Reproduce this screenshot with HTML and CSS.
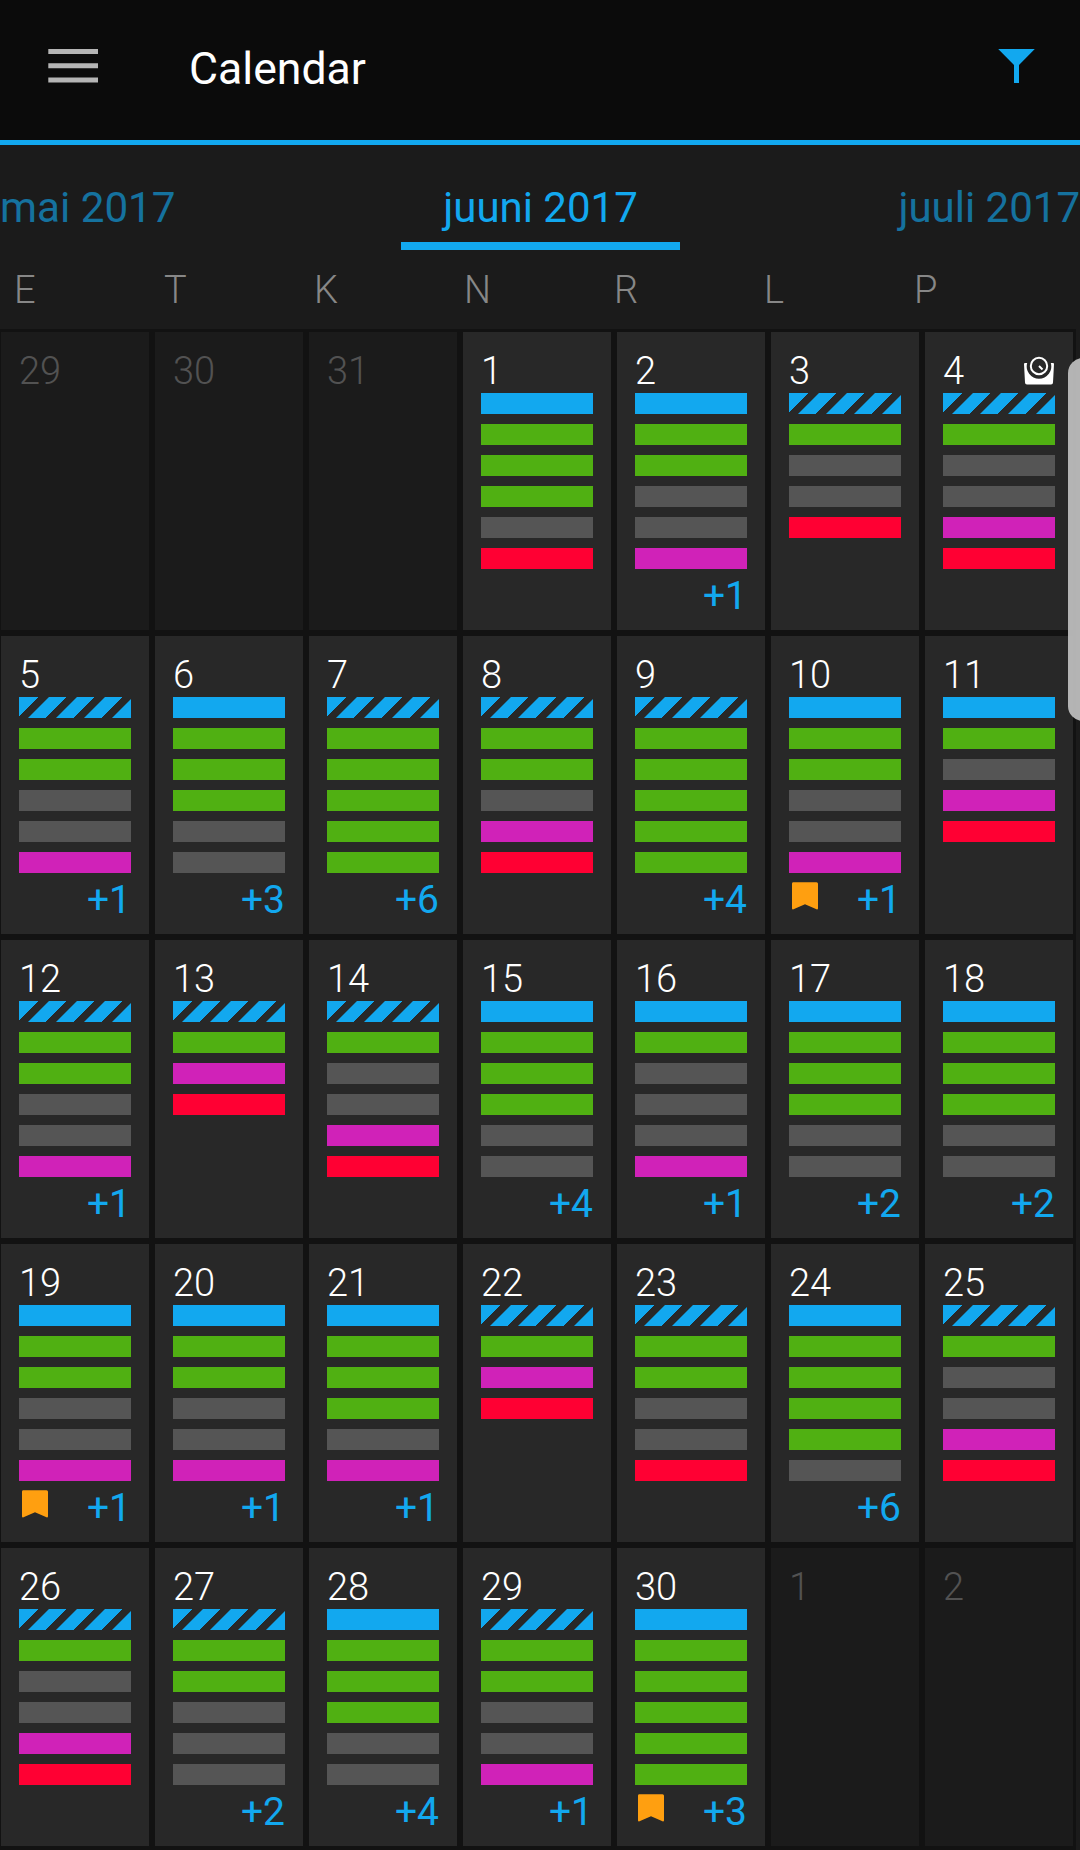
FILE: index.html
```html
<!DOCTYPE html>
<html lang="et">
<head>
<meta charset="utf-8">
<title>Calendar</title>
<link rel="stylesheet" href="styles.css">
</head>
<body>
<svg class="defs" width="0" height="0" aria-hidden="true">
  <symbol id="bookmark" viewBox="0 0 28 28"><path d="M2 .3h23.500a1.500 1.500 0 0 1 1.500 1.500v24.500a1 1 0 0 1-1.500 1L14 22.200 2.500 27.300a1 1 0 0 1-1.500-1V1.800A1.500 1.500 0 0 1 2 .3z"/></symbol>
</svg>
<header class="topbar">
  <svg class="menu" width="50" height="36" viewBox="0 0 50 36"><path d="M.3 1H50v5H.3zM.3 15.200H50v5H.3zM.3 29.400H50v5H.3z"/></svg>
  <h1 class="title">Calendar</h1>
  <svg class="filter" width="38" height="35" viewBox="0 0 38 35"><path d="M1.200 0h36.600L22 16V34h-5V16z"/></svg>
</header>
<nav class="months">
  <span class="month prev">mai 2017</span>
  <span class="month current">juuni 2017</span>
  <span class="month next">juuli 2017</span>
</nav>
<div class="weekdays"><span>E</span><span>T</span><span>K</span><span>N</span><span>R</span><span>L</span><span>P</span></div>
<main class="grid">
  <section class="day out"><b>29</b></section>
  <section class="day out"><b>30</b></section>
  <section class="day out"><b>31</b></section>
  <section class="day"><b>1</b><i class="blue"></i><i class="green"></i><i class="green"></i><i class="green"></i><i></i><i class="red"></i></section>
  <section class="day"><b>2</b><i class="blue"></i><i class="green"></i><i class="green"></i><i></i><i></i><i class="pink"></i><footer><em>+1</em></footer></section>
  <section class="day"><b>3</b><i class="striped"></i><i class="green"></i><i></i><i></i><i class="red"></i></section>
  <section class="day"><b>4<svg class="scale" width="32" height="29" viewBox="0 0 32 29"><path class="body" d="M2 7h2.200A12.300 12.300 0 1 0 27.800 7H30a1 1 0 0 1 1 1L30 26.500a2 2 0 0 1-2 2H4a2 2 0 0 1-2-2L1 8a1 1 0 0 1 1-1z"/><circle cx="16" cy="10" r="8.200"/><path class="needle" d="M16 10l3.500 3.500"/></svg></b><i class="striped"></i><i class="green"></i><i></i><i></i><i class="pink"></i><i class="red"></i></section>

  <section class="day"><b>5</b><i class="striped"></i><i class="green"></i><i class="green"></i><i></i><i></i><i class="pink"></i><footer><em>+1</em></footer></section>
  <section class="day"><b>6</b><i class="blue"></i><i class="green"></i><i class="green"></i><i class="green"></i><i></i><i></i><footer><em>+3</em></footer></section>
  <section class="day"><b>7</b><i class="striped"></i><i class="green"></i><i class="green"></i><i class="green"></i><i class="green"></i><i class="green"></i><footer><em>+6</em></footer></section>
  <section class="day"><b>8</b><i class="striped"></i><i class="green"></i><i class="green"></i><i></i><i class="pink"></i><i class="red"></i></section>
  <section class="day"><b>9</b><i class="striped"></i><i class="green"></i><i class="green"></i><i class="green"></i><i class="green"></i><i class="green"></i><footer><em>+4</em></footer></section>
  <section class="day"><b>10</b><i class="blue"></i><i class="green"></i><i class="green"></i><i></i><i></i><i class="pink"></i><footer><svg class="mark"><use href="#bookmark"/></svg><em>+1</em></footer></section>
  <section class="day"><b>11</b><i class="blue"></i><i class="green"></i><i></i><i class="pink"></i><i class="red"></i></section>

  <section class="day"><b>12</b><i class="striped"></i><i class="green"></i><i class="green"></i><i></i><i></i><i class="pink"></i><footer><em>+1</em></footer></section>
  <section class="day"><b>13</b><i class="striped"></i><i class="green"></i><i class="pink"></i><i class="red"></i></section>
  <section class="day"><b>14</b><i class="striped"></i><i class="green"></i><i></i><i></i><i class="pink"></i><i class="red"></i></section>
  <section class="day"><b>15</b><i class="blue"></i><i class="green"></i><i class="green"></i><i class="green"></i><i></i><i></i><footer><em>+4</em></footer></section>
  <section class="day"><b>16</b><i class="blue"></i><i class="green"></i><i></i><i></i><i></i><i class="pink"></i><footer><em>+1</em></footer></section>
  <section class="day"><b>17</b><i class="blue"></i><i class="green"></i><i class="green"></i><i class="green"></i><i></i><i></i><footer><em>+2</em></footer></section>
  <section class="day"><b>18</b><i class="blue"></i><i class="green"></i><i class="green"></i><i class="green"></i><i></i><i></i><footer><em>+2</em></footer></section>

  <section class="day"><b>19</b><i class="blue"></i><i class="green"></i><i class="green"></i><i></i><i></i><i class="pink"></i><footer><svg class="mark"><use href="#bookmark"/></svg><em>+1</em></footer></section>
  <section class="day"><b>20</b><i class="blue"></i><i class="green"></i><i class="green"></i><i></i><i></i><i class="pink"></i><footer><em>+1</em></footer></section>
  <section class="day"><b>21</b><i class="blue"></i><i class="green"></i><i class="green"></i><i class="green"></i><i></i><i class="pink"></i><footer><em>+1</em></footer></section>
  <section class="day"><b>22</b><i class="striped"></i><i class="green"></i><i class="pink"></i><i class="red"></i></section>
  <section class="day"><b>23</b><i class="striped"></i><i class="green"></i><i class="green"></i><i></i><i></i><i class="red"></i></section>
  <section class="day"><b>24</b><i class="blue"></i><i class="green"></i><i class="green"></i><i class="green"></i><i class="green"></i><i></i><footer><em>+6</em></footer></section>
  <section class="day"><b>25</b><i class="striped"></i><i class="green"></i><i></i><i></i><i class="pink"></i><i class="red"></i></section>

  <section class="day"><b>26</b><i class="striped"></i><i class="green"></i><i></i><i></i><i class="pink"></i><i class="red"></i></section>
  <section class="day"><b>27</b><i class="striped"></i><i class="green"></i><i class="green"></i><i></i><i></i><i></i><footer><em>+2</em></footer></section>
  <section class="day"><b>28</b><i class="blue"></i><i class="green"></i><i class="green"></i><i class="green"></i><i></i><i></i><footer><em>+4</em></footer></section>
  <section class="day"><b>29</b><i class="striped"></i><i class="green"></i><i class="green"></i><i></i><i></i><i class="pink"></i><footer><em>+1</em></footer></section>
  <section class="day"><b>30</b><i class="blue"></i><i class="green"></i><i class="green"></i><i class="green"></i><i class="green"></i><i class="green"></i><footer><svg class="mark"><use href="#bookmark"/></svg><em>+3</em></footer></section>
  <section class="day out"><b>1</b></section>
  <section class="day out"><b>2</b></section>
</main>
<div class="thumb"></div>
</body>
</html>
```
FILE: styles.css
```css
* { box-sizing: border-box; }

body {
  position: relative;
  width: 1080px;
  height: 1850px;
  margin: 0;
  overflow: hidden;
  background: #1b1b1b;
  font-family: Roboto, "Noto Sans", sans-serif;
}

.defs { display: none; }

.topbar {
  display: flex;
  align-items: flex-start;
  height: 145px;
  padding: 48px 45px 0 48px;
  background: #0b0b0b;
  border-bottom: 5px solid #12a8ef;
}

.menu { fill: #b5b5b5; }

.title {
  flex: 1;
  margin: -5px 0 0 91px;
  color: #fff;
  font-size: 44.6px;
  font-weight: 400;
  line-height: 52px;
}

.filter { margin-top: 1px; fill: #12a8ef; }

.months {
  display: grid;
  grid-template-columns: 401px 279px 400px;
  height: 105px;
}

.month {
  padding-top: 38px;
  color: #12a8ef;
  font-size: 42px;
  line-height: 50px;
  white-space: nowrap;
}

.prev, .next { opacity: .62; }
.prev { font-size: 42.2px; }
.current { text-align: center; border-bottom: 8px solid #12a8ef; }
.next { text-align: right; }

.weekdays {
  display: grid;
  grid-template-columns: repeat(7, 150px);
  height: 79px;
  padding: 17px 0 0 14px;
  color: #878787;
  font-size: 38px;
  font-weight: 300;
  line-height: 46px;
}

.grid {
  display: grid;
  grid-template-columns: repeat(7, 148px);
  grid-auto-rows: 298px;
  gap: 6px;
  width: 1076px;
  height: 1521px;
  padding: 3px 0 0 1px;
  background: #121212;
}

.day {
  display: flex;
  flex-direction: column;
  gap: 10px;
  padding: 16px 18px 0;
  background: #282828;
}

.day b {
  display: flex;
  justify-content: space-between;
  align-items: flex-start;
  height: 35px;
  color: #fff;
  font-size: 38px;
  font-weight: 300;
  line-height: 46px;
}

.out { background: #1b1b1b; }
.out b { color: #525252; }

.day i { flex: none; height: 21px; background: #555; }
.day .blue { background: #12a8ef; }
.day .green { background: #50b012; }
.day .pink { background: #d022b8; }
.day .red { background: #ff0033; }

.day .striped {
  background:
    linear-gradient(135deg, #12a8ef 2px, transparent 2px),
    linear-gradient(315deg, #12a8ef 2px, transparent 2px),
    repeating-linear-gradient(135deg, #282828 0 1.1px, #12a8ef 1.7px 13.5px, #282828 14.1px 19.8px);
}

.day footer {
  display: flex;
  align-items: flex-start;
  height: 46px;
  margin-top: -6px;
}

.day em {
  margin-left: auto;
  color: #12a8ef;
  font-size: 39px;
  font-style: normal;
  line-height: 46px;
}

.mark {
  width: 28px;
  height: 28px;
  margin: 5px 0 0 2px;
  fill: #ff9f10;
}

.scale { margin: 8px 0 0; fill: none; stroke: #fff; stroke-width: 2; }
.scale .body { fill: #fff; stroke: none; }

.thumb {
  position: absolute;
  top: 357.5px;
  left: 1068px;
  width: 30px;
  height: 363px;
  border-radius: 15px;
  background: rgba(192, 192, 192, .93);
}
```
